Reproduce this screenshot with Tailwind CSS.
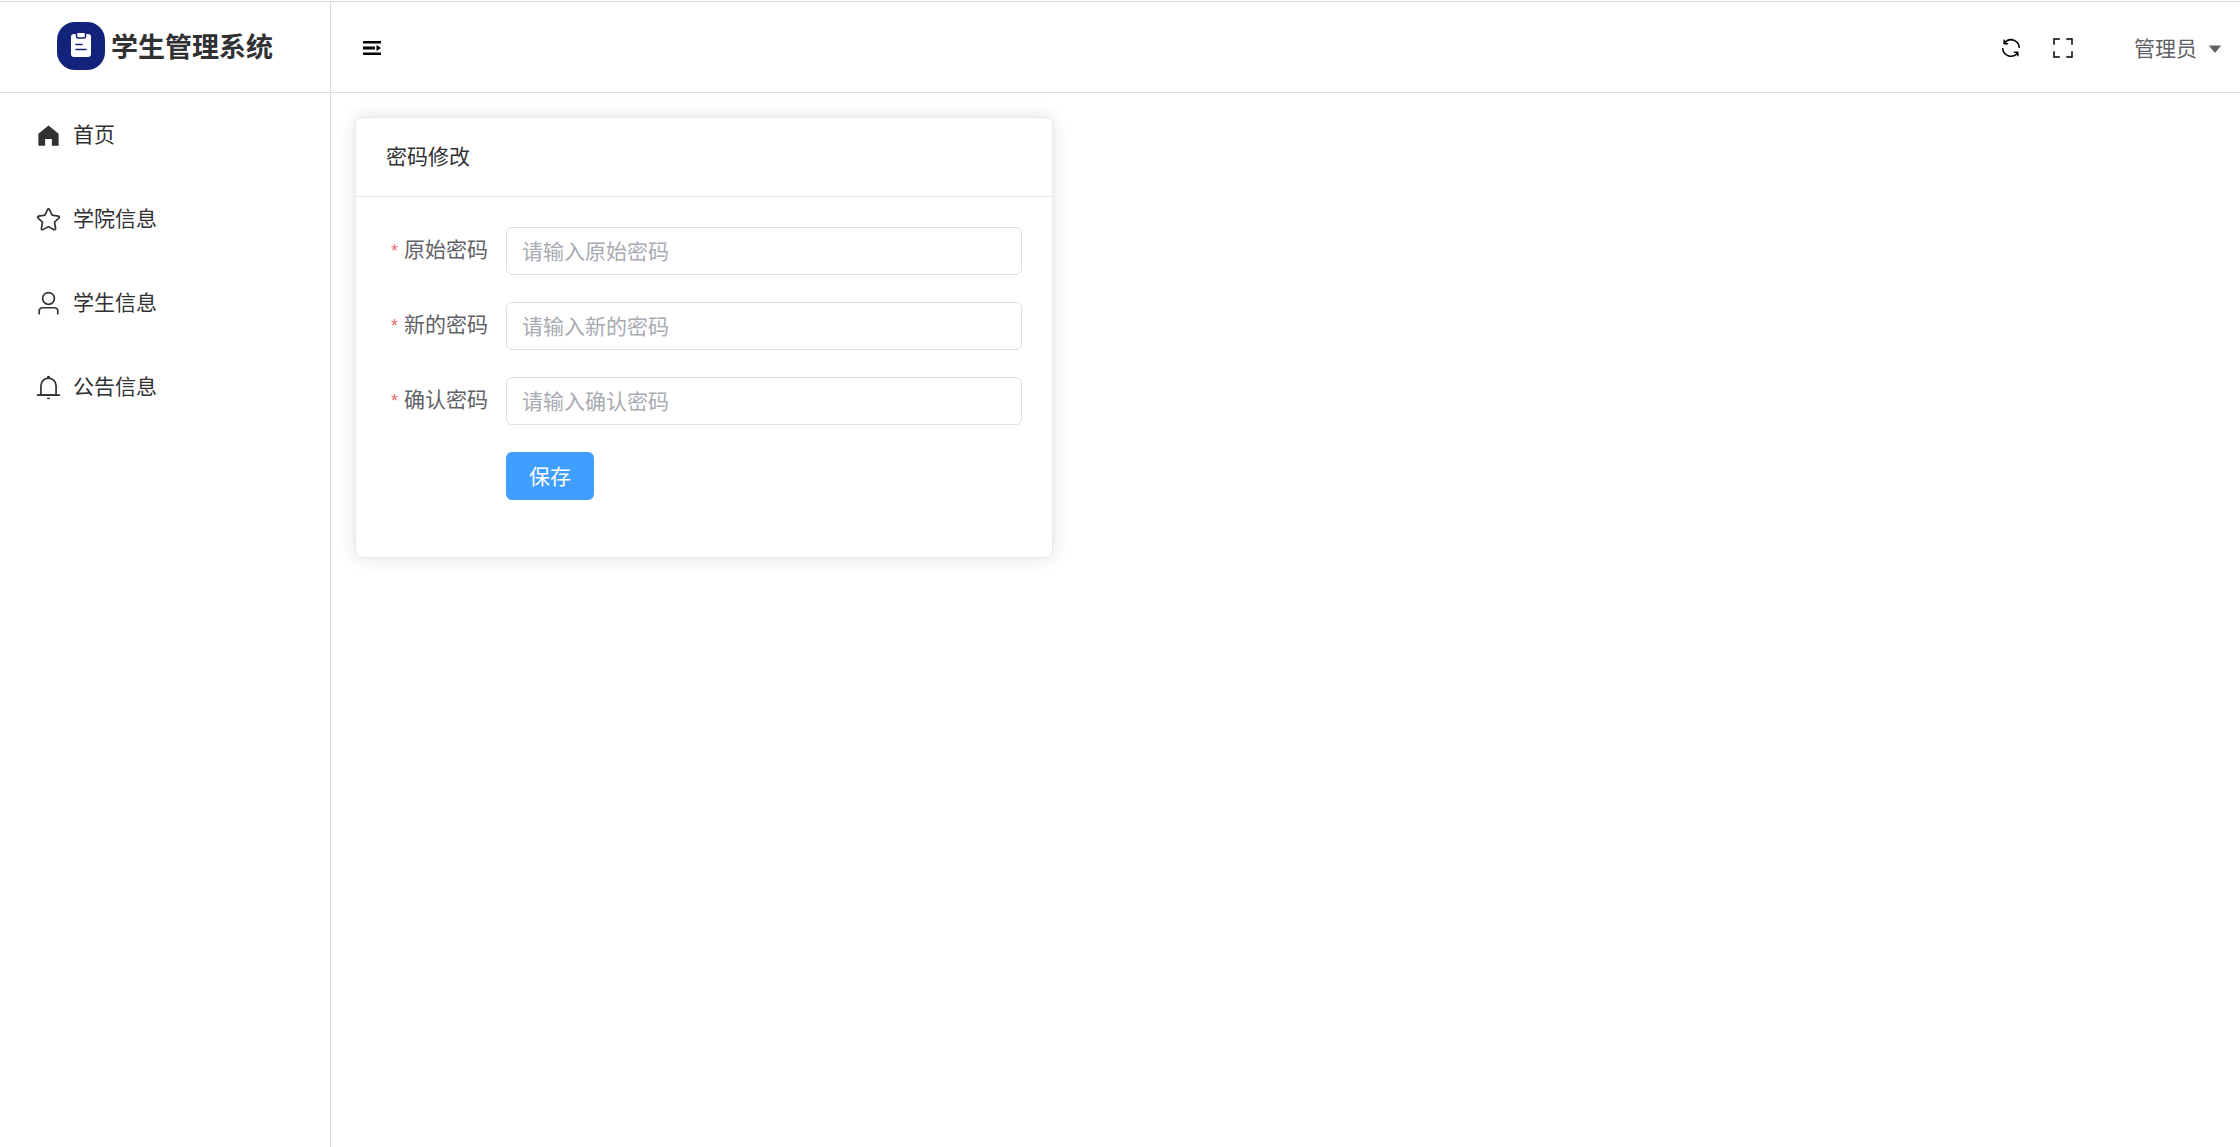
<!DOCTYPE html>
<html lang="zh-CN">

<head>
    <meta charset="UTF-8">
    <meta name="viewport" content="width=device-width, initial-scale=1.0">
    <title>学生管理系统</title>
    <script src="https://cdn.jsdelivr.net/npm/@tailwindcss/browser@4"></script>
</head>

<body class="flex min-h-screen flex-col border-t border-white bg-white font-['Noto_Sans_CJK_SC',sans-serif] text-[21px] leading-6 text-[#303133]">

    <div class="flex flex-1 border-t border-[#dcdcdc]">

        <!-- Sidebar -->
        <aside class="w-[331px] shrink-0 border-r border-[#dcdcdc]">
            <div class="flex h-[91px] items-center justify-center gap-[6px] border-b border-[#dcdcdc] pb-[2px] text-[27px] font-bold">
                <svg class="size-12" viewBox="0 0 48 48">
                    <rect width="48" height="48" rx="18" fill="#13227a" />
                    <rect x="14" y="12" width="20" height="23" rx="3" fill="#fff" />
                    <path d="M19.5 11v3.500q0 1.500 1.500 1.500h6q1.500 0 1.500-1.500V11" fill="#fff" stroke="#13227a" stroke-width="1.500" />
                    <path d="M19 22.500h6M19 27.500h10" stroke="#13227a" stroke-width="1.500" stroke-linecap="round" />
                </svg>
                <span>学生管理系统</span>
            </div>
            <nav>
                <a href="#" class="flex h-[84px] items-center gap-[11px] pl-[35px]">
                    <svg class="size-[27px]" viewBox="0 0 1024 1024" fill="currentColor">
                        <path d="M512 128 128 447.936V896h255.936V640H640v256h255.936V447.936z" />
                    </svg>
                    <span class="pb-1">首页</span>
                </a>
                <a href="#" class="flex h-[84px] items-center gap-[11px] pl-[35px]">
                    <svg class="size-[27px]" viewBox="0 0 1024 1024" fill="currentColor">
                        <path d="m512 747.840 228.160 119.936a6.400 6.400 0 0 0 9.280-6.720l-43.520-254.080 184.512-179.904a6.400 6.400 0 0 0-3.520-10.880l-255.104-37.120L517.760 147.904a6.400 6.400 0 0 0-11.520 0L392.192 379.072l-255.104 37.120a6.400 6.400 0 0 0-3.520 10.880L318.080 606.976l-43.584 254.080a6.400 6.400 0 0 0 9.280 6.720zM313.600 924.480a70.400 70.400 0 0 1-102.144-74.240l37.888-220.928L88.960 472.960A70.400 70.400 0 0 1 128 352.896l221.760-32.256 99.200-200.960a70.400 70.400 0 0 1 126.208 0l99.200 200.960 221.824 32.256a70.400 70.400 0 0 1 39.040 120.064L774.720 629.376l37.888 220.928a70.400 70.400 0 0 1-102.144 74.240L512 820.096l-198.400 104.320z" />
                    </svg>
                    <span class="pb-1">学院信息</span>
                </a>
                <a href="#" class="flex h-[84px] items-center gap-[11px] pl-[35px]">
                    <svg class="size-[27px]" viewBox="0 0 1024 1024" fill="currentColor">
                        <path d="M512 512a192 192 0 1 0 0-384 192 192 0 0 0 0 384m0 64a256 256 0 1 1 0-512 256 256 0 0 1 0 512m320 320v-96a96 96 0 0 0-96-96H288a96 96 0 0 0-96 96v96a32 32 0 1 1-64 0v-96a160 160 0 0 1 160-160h448a160 160 0 0 1 160 160v96a32 32 0 1 1-64 0" />
                    </svg>
                    <span class="pb-1">学生信息</span>
                </a>
                <a href="#" class="flex h-[84px] items-center gap-[11px] pl-[35px]">
                    <svg class="size-[27px]" viewBox="0 0 1024 1024" fill="currentColor">
                        <path d="M512 64a64 64 0 0 1 64 64v64H448v-64a64 64 0 0 1 64-64" />
                        <path d="M256 768h512V448a256 256 0 1 0-512 0zm256-640a320 320 0 0 1 320 320v384H192V448a320 320 0 0 1 320-320" />
                        <path d="M96 768h832q32 0 32 32t-32 32H96q-32 0-32-32t32-32m352 128h128a64 64 0 0 1-128 0" />
                    </svg>
                    <span class="pb-1">公告信息</span>
                </a>
            </nav>
        </aside>

        <div class="flex min-w-0 flex-1 flex-col">

            <!-- Header -->
            <header class="flex h-[91px] items-center justify-between border-b border-[#dcdcdc] pt-[2px] pr-[15px] pl-[29px]">
                <button type="button" aria-label="折叠菜单" class="text-black">
                    <svg class="size-6" viewBox="0 0 24 24" fill="currentColor">
                        <path d="M3 5h18v2.500H3zM3 10.500h12v3H3zM3 16.500h18V19H3zM16.500 9l4.500 3-4.500 3z" />
                    </svg>
                </button>
                <div class="flex items-center">
                    <button type="button" aria-label="刷新" class="mr-7 text-black">
                        <svg class="size-6" viewBox="0 0 1024 1024" fill="currentColor">
                            <path d="M771.776 794.880A384 384 0 0 1 128 512h64a320 320 0 0 0 555.712 216.448H654.720a32 32 0 1 1 0-64h149.056a32 32 0 0 1 32 32v148.928a32 32 0 1 1-64 0v-50.560zM276.288 295.616h92.992a32 32 0 0 1 0 64H220.160a32 32 0 0 1-32-32V178.560a32 32 0 0 1 64 0v50.560A384 384 0 0 1 896.128 512h-64a320 320 0 0 0-555.776-216.384z" />
                        </svg>
                    </button>
                    <button type="button" aria-label="全屏" class="mr-[59px] text-black">
                        <svg class="size-6" viewBox="0 0 1024 1024" fill="currentColor">
                            <path d="m160 96.064 192 .192a32 32 0 0 1 0 64l-192-.192V352a32 32 0 0 1-64 0V96h64zm0 831.872V928H96V672a32 32 0 1 1 64 0v191.936l192-.192a32 32 0 1 1 0 64zM864 96.064V96h64v256a32 32 0 1 1-64 0V160.064l-192 .192a32 32 0 1 1 0-64zm0 831.872-192-.192a32 32 0 0 1 0-64l192 .192V672a32 32 0 1 1 64 0v256h-64z" />
                        </svg>
                    </button>
                    <button type="button" class="flex items-center gap-2 text-[#606266]">
                        <span class="pb-[2px]">管理员</span>
                        <svg class="size-5" viewBox="0 0 1024 1024" fill="currentColor">
                            <path d="m192 384 320 384 320-384z" />
                        </svg>
                    </button>
                </div>
            </header>

            <!-- Main Content -->
            <main class="p-6">
                <section class="w-[698px] max-w-full rounded-md border border-[#e4e7ed] shadow-[0_0_18px_rgba(0,0,0,0.12)]">
                    <h1 class="border-b border-[#e4e7ed] px-[30px] pt-[25px] pb-[29px]">密码修改</h1>
                    <form class="flex flex-col gap-[27px] px-[30px] pt-[30px] pb-[57px]">
                        <div class="flex h-12 items-center">
                            <label for="old-password" class="w-[120px] pr-[18px] pb-[3px] text-right text-[#606266]"><span class="mr-[6px] font-['Liberation_Sans'] text-lg leading-6 text-[#f56c6c]">*</span>原始密码</label>
                            <input id="old-password" type="password" placeholder="请输入原始密码" class="h-12 min-w-0 flex-1 rounded-md border border-[#dcdfe6] px-[15px] pb-[2px] placeholder:text-[#a8abb2] focus:border-[#409eff] focus:outline-none">
                        </div>
                        <div class="flex h-12 items-center">
                            <label for="new-password" class="w-[120px] pr-[18px] pb-[3px] text-right text-[#606266]"><span class="mr-[6px] font-['Liberation_Sans'] text-lg leading-6 text-[#f56c6c]">*</span>新的密码</label>
                            <input id="new-password" type="password" placeholder="请输入新的密码" class="h-12 min-w-0 flex-1 rounded-md border border-[#dcdfe6] px-[15px] pb-[2px] placeholder:text-[#a8abb2] focus:border-[#409eff] focus:outline-none">
                        </div>
                        <div class="flex h-12 items-center">
                            <label for="confirm-password" class="w-[120px] pr-[18px] pb-[3px] text-right text-[#606266]"><span class="mr-[6px] font-['Liberation_Sans'] text-lg leading-6 text-[#f56c6c]">*</span>确认密码</label>
                            <input id="confirm-password" type="password" placeholder="请输入确认密码" class="h-12 min-w-0 flex-1 rounded-md border border-[#dcdfe6] px-[15px] pb-[2px] placeholder:text-[#a8abb2] focus:border-[#409eff] focus:outline-none">
                        </div>
                        <button type="submit" class="ml-[120px] h-12 self-start rounded-md bg-[#409eff] px-[23px] pb-[2px] text-white">保存</button>
                    </form>
                </section>
            </main>
        </div>
    </div>

</body>

</html>
